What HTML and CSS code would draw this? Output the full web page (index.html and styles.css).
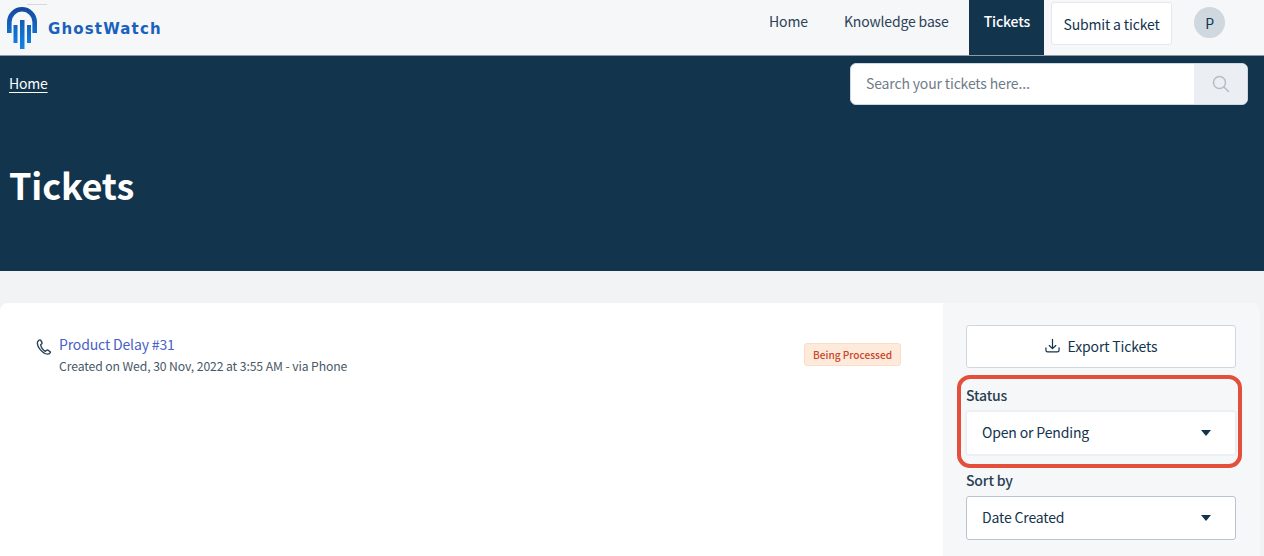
FILE: index.html
```html
<!DOCTYPE html>
<html lang="en">
<head>
<meta charset="utf-8">
<title>Tickets</title>
<link rel="stylesheet" href="styles.css">
</head>
<body>
<header class="topbar">
  <a class="brand" href="#">
    <svg class="brand-mark" width="30" height="49" viewBox="0 0 30 49" fill="none">
      <defs>
        <linearGradient id="b" gradientUnits="userSpaceOnUse" x1="0" y1="7" x2="0" y2="49">
          <stop offset="0" stop-color="#17479e"/>
          <stop offset="1" stop-color="#0f86e8"/>
        </linearGradient>
      </defs>
      <path d="M20 4.500H40" stroke="#d5d9dd" stroke-width="1"/>
      <path d="M2.300 33V22a12.700 12.700 0 0 1 25.400 0V33" stroke="url(#b)" stroke-width="4.600"/>
      <path d="M6.500 25h4v18h-4zM13 20h4.500v29H13zM20 25h4v18h-4z" fill="url(#b)"/>
    </svg>
    <span class="brand-name">GhostWatch</span>
  </a>
  <nav class="nav">
    <a class="nav-link" href="#">Home</a>
    <a class="nav-link" href="#">Knowledge base</a>
    <a class="nav-link is-active" href="#">Tickets</a>
    <a class="nav-button" href="#">Submit a ticket</a>
    <span class="avatar">P</span>
  </nav>
</header>

<section class="hero">
  <div class="hero-top">
    <a class="crumb" href="#">Home</a>
    <div class="search">
      <span class="search-input">Search your tickets here...</span>
      <span class="search-btn">
        <svg width="18" height="18" viewBox="0 0 18 18" fill="none" stroke="#b4bdc6" stroke-width="1.500" stroke-linecap="round">
          <circle cx="7.500" cy="7.500" r="6"/>
          <path d="M12 12l4.500 4.500"/>
        </svg>
      </span>
    </div>
  </div>
  <h1 class="title">Tickets</h1>
</section>

<main class="board">
  <section class="list">
    <article class="ticket">
      <svg class="ticket-icon" width="16" height="16" viewBox="0 0 16 16" fill="none" stroke="#2b4357" stroke-width="1.400" stroke-linejoin="round" stroke-linecap="round">
        <path d="M1.500 2.800C2.200 1.800 3.200 .9 4 .9c.5 0 .8.3 1 .7l1 2c.2.4.1.8-.2 1.100L4.700 5.800c.5 2.600 2.500 5.300 4.700 6.500l1.200-1c.3-.3.8-.3 1.200-.1l2 1.100c.6.300.8.900.5 1.400-.6 1-1.600 1.500-2.700 1.400C6.500 14.800 .6 7.500 1.500 2.800z"/>
      </svg>
      <div class="ticket-body">
        <a class="ticket-title" href="#">Product Delay #31</a>
        <p class="ticket-meta">Created on Wed, 30 Nov, 2022 at 3:55 AM - via Phone</p>
      </div>
      <span class="badge">Being Processed</span>
    </article>
  </section>
  <aside class="side">
    <a class="export" href="#">
      <svg width="15" height="16" viewBox="0 0 16 16" fill="none" stroke="#12344d" stroke-width="1.300" stroke-linecap="round" stroke-linejoin="round">
        <path d="M8 1v9.500M4.500 7.500L8 10.800l3.500-3.300"/>
        <path d="M1 10v2.500c0 1 .8 1.800 1.800 1.800h10.400c1 0 1.800-.8 1.800-1.800V10"/>
      </svg>
      Export Tickets
    </a>
    <div class="field field-status">
      <label class="field-label">Status</label>
      <div class="select select-flat">Open or Pending<span class="caret"></span></div>
      <span class="highlight"></span>
    </div>
    <div class="field">
      <label class="field-label">Sort by</label>
      <div class="select">Date Created<span class="caret"></span></div>
    </div>
  </aside>
</main>
</body>
</html>
```
FILE: styles.css
```css
* { box-sizing: border-box; }
html, body { height: 100%; }
body {
  margin: 0;
  height: 556px;
  overflow: hidden;
  background: #f1f3f5;
  color: #12344d;
  font-family: "Noto Sans CJK SC", "Noto Sans", sans-serif;
  font-size: 14px;
  letter-spacing: -.15px;
}
a { text-decoration: none; color: inherit; }

.topbar {
  height: 55px;
  display: flex;
  justify-content: space-between;
  padding-left: 7px;
  padding-right: 39px;
  background: #f5f7f9;
}
.brand { display: flex; align-items: flex-start; gap: 11px; }
.brand-mark { display: block; overflow: visible; }
.brand-name {
  font-family: "DejaVu Sans", sans-serif;
  font-weight: 700;
  font-size: 15px;
  line-height: 20px;
  letter-spacing: 1.150px;
  color: #1a60bd;
  margin-top: 18.500px;
}
.nav { display: flex; align-items: stretch; }
.nav-link {
  display: flex;
  align-items: center;
  padding: 0 18px 13px;
  color: #2c4255;
}
.nav-link.is-active {
  background: #12344d;
  color: #fff;
  font-weight: 500;
  margin-left: 2px;
  padding: 0 14px 13px 15px;
}
.nav-button {
  margin: 2px 0 0 7px;
  height: 43px;
  width: 121px;
  display: flex;
  align-items: center;
  justify-content: center;
  background: #fff;
  border: 1px solid #e5e9ee;
  border-radius: 3px;
  color: #12344d;
}
.avatar {
  margin: 7px 0 0 22px;
  width: 31px;
  height: 31px;
  border-radius: 50%;
  background: #cfd7df;
  display: flex;
  align-items: center;
  justify-content: center;
  font-size: 14px;
}

.hero {
  height: 216px;
  background: #12344d;
  border-top: 1px solid #8e9ba6;
  padding: 7px 16px 0 9px;
  color: #fff;
}
.hero-top { display: flex; justify-content: space-between; align-items: flex-start; }
.crumb { text-decoration: underline; text-underline-offset: 3px; margin-top: 9px; line-height: 22px; letter-spacing: -.2px; }
.search {
  width: 398px;
  height: 42px;
  display: flex;
  border: 1px solid #cfd7df;
  border-radius: 6px;
  overflow: hidden;
  background: #fff;
}
.search-input {
  flex: 1;
  display: flex;
  align-items: center;
  padding: 0 0 3px 15px;
  color: #6f7c87;
}
.search-btn {
  width: 53px;
  display: flex;
  align-items: center;
  justify-content: center;
  background: #ebeff3;
}
.title {
  margin: 55px 0 0;
  font-size: 36px;
  line-height: 48px;
  font-weight: 700;
  letter-spacing: -.15px;
}

.board {
  margin: 32px 4px 0 0;
  height: 253px;
  display: flex;
  border-radius: 8px 8px 0 0;
  overflow: hidden;
}
.list { width: 943px; background: #fff; padding: 29px 42px 0 36px; }
.ticket { display: flex; align-items: flex-start; }
.ticket-icon { margin-top: 7px; flex: none; }
.ticket-body { flex: 1; padding-left: 7px; }
.ticket-title { color: #475fc9; display: block; line-height: 24px; }
.ticket-meta { margin: 0; font-size: 12.200px; letter-spacing: -.1px; line-height: 20px; color: #475867; }
.badge {
  margin-top: 11px;
  height: 23px;
  padding: 0 8px;
  display: flex;
  align-items: center;
  font-size: 10.100px;
  letter-spacing: 0;
  font-weight: 500;
  color: #c8452a;
  background: #feeadb;
  border: 1px solid #fbdcc7;
  border-radius: 3px;
}

.side { flex: 1; background: #f5f7f9; padding: 22px 24px 0 23px; }
.export {
  height: 43px;
  display: flex;
  align-items: center;
  justify-content: center;
  gap: 8px;
  padding-bottom: 1px;
  background: #fff;
  border: 1px solid #cfd7df;
  border-radius: 3px;
  color: #12344d;
}
.field { position: relative; margin-top: 11px; }
.field-status { margin-top: 16px; }
.field + .field { margin-top: 14px; }
.field-label { display: block; line-height: 22px; font-weight: 500; color: #283f52; margin-bottom: 5px; }
.select {
  height: 44px;
  display: flex;
  align-items: center;
  justify-content: space-between;
  padding: 0 24px 2px 15px;
  background: #fff;
  border: 1px solid #b9c4cf;
  border-radius: 3px;
  color: #12344d;
}
.select-flat { border-color: #ebeff3; box-shadow: 0 0 0 1px #eef1f4; }
.caret {
  width: 0;
  height: 0;
  margin-top: 2px;
  border-left: 5.500px solid transparent;
  border-right: 5.500px solid transparent;
  border-top: 6px solid #12344d;
}
.highlight {
  position: absolute;
  left: -9px;
  right: -6px;
  top: -9px;
  bottom: -13px;
  border: 4px solid #e34f3b;
  border-radius: 13px;
  pointer-events: none;
}
```
